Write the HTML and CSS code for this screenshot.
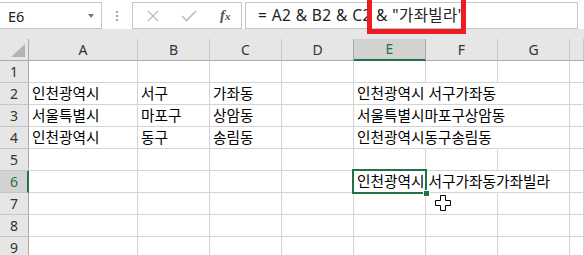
FILE: index.html
```html
<!DOCTYPE html>
<html lang="ko">
<head>
    <meta charset="UTF-8">
    <meta name="viewport" content="width=device-width, initial-scale=1.0">
    <title>Excel</title>
    <link rel="stylesheet" href="styles.css">
</head>
<body>
    <!-- 수식 입력줄 -->
    <div class="formula-bar">
        <div class="name-box">
            <span class="name">E6</span>
            <span class="caret"></span>
        </div>
        <div class="grip"><i></i><i></i><i></i></div>
        <div class="fx-box">
            <svg class="btn-icon" width="12" height="12" viewBox="0 0 12 12">
                <path d="M1 1 L11 11 M11 1 L1 11" stroke="#bdbdbd" stroke-width="1.4" fill="none"/>
            </svg>
            <svg class="btn-icon" width="16" height="12" viewBox="0 0 16 12">
                <path d="M1 6 L5.5 10.5 L15 1" stroke="#bdbdbd" stroke-width="1.6" fill="none"/>
            </svg>
            <span class="fx"><i>f</i><span>x</span></span>
        </div>
        <div class="formula-input">
            <span class="formula">= A2 &amp; B2 &amp; C2 &amp; "가좌빌라"</span>
        </div>
        <div class="callout"></div>
    </div>

    <div class="band"></div>

    <!-- 시트 -->
    <div class="sheet">
        <div class="grid">
            <div class="corner"><span class="tri"></span></div>
            <div class="hd">A</div>
            <div class="hd">B</div>
            <div class="hd">C</div>
            <div class="hd hd-d">D</div>
            <div class="hd sel">E</div>
            <div class="hd">F</div>
            <div class="hd">G</div>
            <div class="hd last"></div>

            <div class="rh">1</div>
            <div class="c"></div><div class="c"></div><div class="c"></div><div class="c"></div>
            <div class="c"></div><div class="c"></div><div class="c"></div><div class="c"></div>

            <div class="rh">2</div>
            <div class="c">인천광역시</div><div class="c">서구</div><div class="c">가좌동</div><div class="c"></div>
            <div class="c join">인천광역시 서구가좌동</div><div class="c join"></div><div class="c"></div><div class="c"></div>

            <div class="rh">3</div>
            <div class="c">서울특별시</div><div class="c">마포구</div><div class="c">상암동</div><div class="c"></div>
            <div class="c join">서울특별시마포구상암동</div><div class="c join"></div><div class="c"></div><div class="c"></div>

            <div class="rh">4</div>
            <div class="c">인천광역시</div><div class="c">동구</div><div class="c">송림동</div><div class="c"></div>
            <div class="c join">인천광역시동구송림동</div><div class="c join"></div><div class="c"></div><div class="c"></div>

            <div class="rh">5</div>
            <div class="c"></div><div class="c"></div><div class="c"></div><div class="c"></div>
            <div class="c"></div><div class="c"></div><div class="c"></div><div class="c"></div>

            <div class="rh sel">6</div>
            <div class="c"></div><div class="c"></div><div class="c"></div><div class="c"></div>
            <div class="c join">인천광역시 서구가좌동가좌빌라</div><div class="c join"></div><div class="c"></div><div class="c"></div>

            <div class="rh">7</div>
            <div class="c"></div><div class="c"></div><div class="c"></div><div class="c"></div>
            <div class="c"></div><div class="c"></div><div class="c"></div><div class="c"></div>

            <div class="rh">8</div>
            <div class="c"></div><div class="c"></div><div class="c"></div><div class="c"></div>
            <div class="c"></div><div class="c"></div><div class="c"></div><div class="c"></div>

            <div class="rh">9</div>
            <div class="c"></div><div class="c"></div><div class="c"></div><div class="c"></div>
            <div class="c"></div><div class="c"></div><div class="c"></div><div class="c"></div>
        </div>

        <!-- 선택된 셀 E6 -->
        <div class="selection"><span class="handle"></span></div>

        <!-- 마우스 커서 -->
        <svg class="cursor" width="18" height="16" viewBox="0 0 18 16">
            <path d="M6.5 0.5 H11.5 V5.5 H16.5 V10.5 H11.5 V15.5 H6.5 V10.5 H1.5 V5.5 H6.5 Z" fill="#fff" stroke="#000" stroke-width="1"/>
        </svg>
    </div>
</body>
</html>
```

FILE: styles.css
```css
*{
    margin: 0;
    padding: 0;
    box-sizing: border-box;
}
body{
    width: 584px;
    height: 255px;
    overflow: hidden;
    background: #fff;
    font-family: "Noto Sans", "Noto Sans CJK KR", sans-serif;
}

/* 수식 입력줄 */
.formula-bar{
    position: relative;
    height: 29px;
    display: flex;
    align-items: flex-start;
    padding-top: 2px;
    background: #fff;
}
.name-box{
    width: 102px;
    height: 27px;
    border: 1px solid #c6c6c6;
    border-left: none;
    display: flex;
    align-items: center;
    justify-content: space-between;
    padding: 0 7px 0 8px;
    font-size: 14.5px;
    color: #222;
}
.caret{
    width: 0;
    height: 0;
    border-left: 3.5px solid transparent;
    border-right: 3.5px solid transparent;
    border-top: 4px solid #777;
}
.grip{
    width: 30px;
    height: 27px;
    display: flex;
    flex-direction: column;
    align-items: center;
    justify-content: center;
    gap: 2px;
}
.grip i{
    width: 2px;
    height: 2px;
    background: #a6a6a6;
}
.fx-box{
    width: 110px;
    height: 27px;
    border: 1px solid #c6c6c6;
    display: flex;
    align-items: center;
    padding-left: 14px;
}
.btn-icon{
    display: block;
}
.btn-icon + .btn-icon{
    margin-left: 22px;
}
.fx{
    margin-left: 23px;
    font-family: "Liberation Serif", serif;
    font-size: 15px;
    color: #555;
    font-weight: bold;
}
.fx i{
    font-style: italic;
}
.fx span{
    font-style: italic;
    font-size: 11px;
}
.formula-input{
    margin-left: 3px;
    width: 333px;
    height: 27px;
    border: 1px solid #c6c6c6;
    padding-left: 12px;
    font-size: 15.5px;
    letter-spacing: 0.4px;
    line-height: 24px;
    color: #222;
    white-space: nowrap;
    overflow: hidden;
}
.callout{
    position: absolute;
    left: 367px;
    top: -5px;
    width: 99px;
    height: 39px;
    border: 5px solid #ec1c24;
}

.band{
    height: 10px;
    background: #e6e6e6;
}

/* 시트 */
.sheet{
    position: relative;
}
.grid{
    display: grid;
    grid-template-columns: 29px 109px 72px 72px 72px 72px 72px 72px 1fr;
    grid-auto-rows: 22px;
}
.grid > div{
    border-right: 1px solid #d4d4d4;
    border-bottom: 1px solid #d4d4d4;
    white-space: nowrap;
}
.corner{
    position: relative;
    background: #e6e6e6;
    border-right-color: #ababab !important;
    border-bottom-color: #ababab !important;
}
.tri{
    position: absolute;
    right: 3px;
    bottom: 3px;
    width: 0;
    height: 0;
    border-left: 14px solid transparent;
    border-bottom: 13px solid #b4b4b4;
}
.hd{
    background: #e6e6e6;
    border-right-color: #c6c6c6 !important;
    border-bottom-color: #ababab !important;
    text-align: center;
    font-size: 14px;
    line-height: 21px;
    color: #333;
}
.hd-d{
    border-right-color: #a6a6a6 !important;
}
.hd.sel{
    background: #d2d2d2;
    color: #217346;
    border-right-color: #a6a6a6 !important;
    border-bottom: 2px solid #217346 !important;
    line-height: 20px;
}
.rh{
    background: #e6e6e6;
    border-right-color: #ababab !important;
    border-bottom-color: #c6c6c6 !important;
    text-align: center;
    font-size: 14px;
    line-height: 21px;
    color: #333;
}
.rh.sel{
    background: #d2d2d2;
    color: #217346;
    border-right: 2px solid #217346 !important;
    padding-left: 1px;
}
.c{
    font-family: "Noto Sans CJK KR", sans-serif;
    font-size: 14.67px;
    line-height: 20px;
    padding-left: 3px;
    color: #000;
    overflow: visible;
}
.c.join{
    border-right-color: transparent !important;
}

.selection{
    position: absolute;
    left: 352px;
    top: 130px;
    width: 75px;
    height: 25px;
    border: 2px solid #217346;
}
.handle{
    position: absolute;
    right: -5px;
    bottom: -5px;
    width: 7px;
    height: 7px;
    background: #217346;
    border: 1px solid #fff;
}
.cursor{
    position: absolute;
    left: 434px;
    top: 156px;
}
```
